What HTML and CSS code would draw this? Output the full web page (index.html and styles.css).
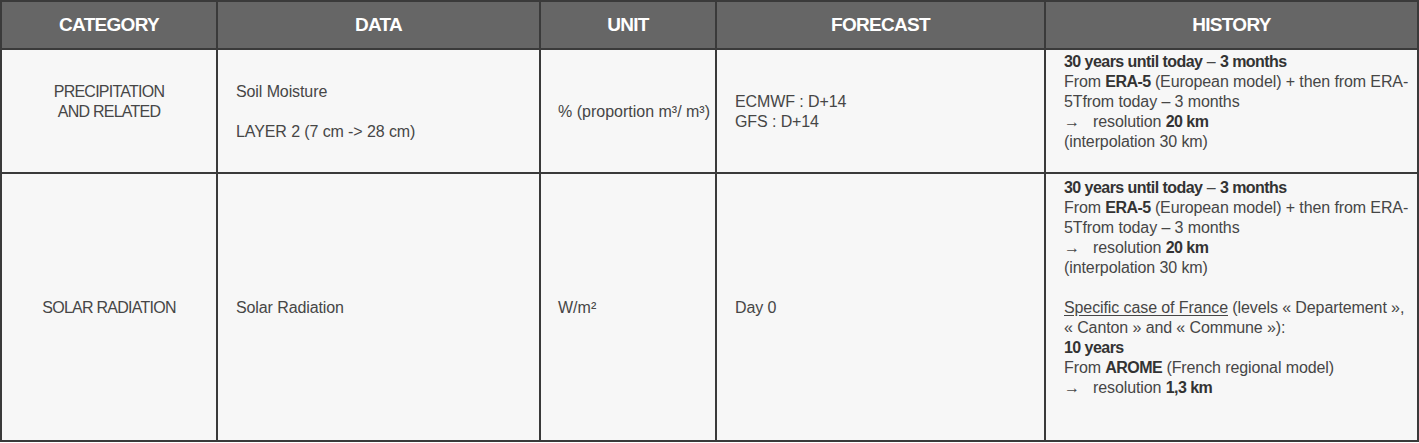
FILE: index.html
```html
<!DOCTYPE html>
<html>
<head>
<meta charset="utf-8">
<link rel="stylesheet" href="styles.css">
</head>
<body>
<table class="grid">
  <colgroup>
    <col class="c-cat">
    <col class="c-data">
    <col class="c-unit">
    <col class="c-fc">
    <col class="c-hist">
  </colgroup>
  <thead>
    <tr class="head">
      <th>CATEGORY</th>
      <th>DATA</th>
      <th>UNIT</th>
      <th>FORECAST</th>
      <th>HISTORY</th>
    </tr>
  </thead>
  <tbody>
    <tr class="row-a">
      <td class="cat">PRECIPITATION<br>AND RELATED<br><br></td>
      <td>Soil Moisture<br><br>LAYER 2 (7 cm -&gt; 28 cm)</td>
      <td class="unit">% (proportion m³/ m³)</td>
      <td>ECMWF : D+14<br>GFS : D+14</td>
      <td class="hist"><b>30 years until today</b> – <b>3 months</b><br>From <b>ERA-5</b> (European model) + then from ERA-<br>5Tfrom today – 3 months<br><span class="arrow">→</span>resolution <b>20 km</b><br>(interpolation 30 km)<br><br></td>
    </tr>
    <tr class="row-b">
      <td class="cat">SOLAR RADIATION</td>
      <td>Solar Radiation</td>
      <td class="unit">W/m²</td>
      <td>Day 0</td>
      <td class="hist"><b>30 years until today</b> – <b>3 months</b><br>From <b>ERA-5</b> (European model) + then from ERA-<br>5Tfrom today – 3 months<br><span class="arrow">→</span>resolution <b>20 km</b><br>(interpolation 30 km)<br><br><u>Specific case of France</u> (levels « Departement »,<br>« Canton » and « Commune »):<br><b>10 years</b><br>From <b>AROME</b> (French regional model)<br><span class="arrow">→</span>resolution <b>1,3 km</b><br><br><br></td>
    </tr>
  </tbody>
</table>
</body>
</html>
```
FILE: styles.css
```css
html, body {
  margin: 0;
  padding: 0;
  background: #ffffff;
}

.grid {
  border-collapse: collapse;
  table-layout: fixed;
  width: 1417px;
  font-family: "Liberation Sans", Arial, sans-serif;
  font-size: 16px;
  line-height: 20px;
  letter-spacing: -0.1px;
  color: #464646;
}

.c-cat { width: 216px; }
.c-data { width: 323px; }
.c-unit { width: 176px; }
.c-fc { width: 329px; }
.c-hist { width: 373px; }

.grid th,
.grid td {
  border: 2px solid #3a3a3a;
  padding: 2px 0 0 18px;
  vertical-align: middle;
  text-align: left;
  white-space: nowrap;
  overflow: hidden;
}

.grid th {
  background: #666666;
  color: #ffffff;
  font-size: 19px;
  font-weight: bold;
  letter-spacing: -0.7px;
  text-align: center;
  padding: 0;
  height: 46px;
}

.grid td {
  background: #f7f7f7;
}

.grid td.cat {
  text-align: center;
  padding: 2px 0 0 0;
  letter-spacing: -0.75px;
}

.grid td.unit {
  padding-left: 17px;
  letter-spacing: 0;
}

.row-a td { height: 118px; }
.row-b td { height: 264px; }

.hist b {
  font-weight: bold;
  color: #333333;
  letter-spacing: -0.55px;
}

.hist u {
  text-decoration: underline;
  text-underline-offset: 2px;
}

.arrow {
  display: inline-block;
  width: 29px;
}
```
